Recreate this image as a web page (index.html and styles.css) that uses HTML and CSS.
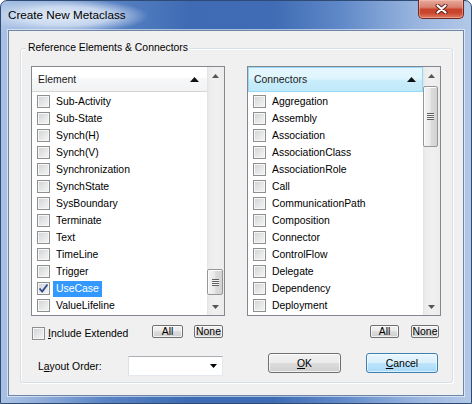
FILE: index.html
```html
<!DOCTYPE html>
<html>
<head>
<meta charset="utf-8">
<title>Create New Metaclass</title>
<link rel="stylesheet" href="styles.css">
</head>
<body>
<div class="window">
  <div class="titlebar">
    <span class="title">Create New Metaclass</span>
    <div class="close">
      <svg width="13" height="10" viewBox="0 0 13 10"><path d="M2.5 1.5 L10.5 8.5 M10.5 1.5 L2.5 8.5" stroke="#5a2219" stroke-width="4" stroke-linecap="round"/><path d="M2.5 1.5 L10.5 8.5 M10.5 1.5 L2.5 8.5" stroke="#fff" stroke-width="2.2" stroke-linecap="round"/></svg>
    </div>
  </div>
  <div class="client">
    <div class="group">
      <span class="group-label">Reference Elements &amp; Connectors</span>
      <div class="cols">
        <div class="col">
          <div class="listbox">
            <div class="list-main">
              <div class="lv-header">
                <span>Element</span>
                <svg class="sort" width="9" height="5" viewBox="0 0 9 5"><path d="M4.5 0 L9 5 H0 Z" fill="#111"/></svg>
              </div>
              <div class="rows">
                <div class="row"><span class="cb"></span><span class="txt">Sub-Activity</span></div>
                <div class="row"><span class="cb"></span><span class="txt">Sub-State</span></div>
                <div class="row"><span class="cb"></span><span class="txt">Synch(H)</span></div>
                <div class="row"><span class="cb"></span><span class="txt">Synch(V)</span></div>
                <div class="row"><span class="cb"></span><span class="txt">Synchronization</span></div>
                <div class="row"><span class="cb"></span><span class="txt">SynchState</span></div>
                <div class="row"><span class="cb"></span><span class="txt">SysBoundary</span></div>
                <div class="row"><span class="cb"></span><span class="txt">Terminate</span></div>
                <div class="row"><span class="cb"></span><span class="txt">Text</span></div>
                <div class="row"><span class="cb"></span><span class="txt">TimeLine</span></div>
                <div class="row"><span class="cb"></span><span class="txt">Trigger</span></div>
                <div class="row"><span class="cb checked"><svg width="11" height="11" viewBox="0 0 11 11"><path d="M1.5 5.5 L4.2 8.5 L9.5 1.5" fill="none" stroke="#2c4a8e" stroke-width="1.8"/></svg></span><span class="txt selected">UseCase</span></div>
                <div class="row"><span class="cb"></span><span class="txt">ValueLifeline</span></div>
              </div>
            </div>
            <div class="vscroll">
              <div class="sb-btn"><svg width="7" height="4" viewBox="0 0 7 4"><path d="M3.5 0 L7 4 H0 Z" fill="#555"/></svg></div>
              <div class="sb-track"><div class="thumb thumb-left"><div class="grip"></div></div></div>
              <div class="sb-btn"><svg width="7" height="4" viewBox="0 0 7 4"><path d="M0 0 H7 L3.5 4 Z" fill="#555"/></svg></div>
            </div>
          </div>
          <div class="ctl-row">
            <label class="chk"><span class="cb"></span><span class="chk-text"><u>I</u>nclude Extended</span></label>
            <div class="btns">
              <button class="btn sbtn all-l">All</button>
              <button class="btn sbtn none-l">None</button>
            </div>
          </div>
          <div class="bottom-row bottom-left">
            <span class="lbl">L<u>a</u>yout Order:</span>
            <div class="combo"><svg width="7" height="4" viewBox="0 0 7 4"><path d="M0 0 H7 L3.5 4 Z" fill="#000"/></svg></div>
          </div>
        </div>
        <div class="col">
          <div class="listbox">
            <div class="list-main">
              <div class="lv-header hot">
                <span>Connectors</span>
                <svg class="sort" width="9" height="5" viewBox="0 0 9 5"><path d="M4.5 0 L9 5 H0 Z" fill="#111"/></svg>
              </div>
              <div class="rows">
                <div class="row"><span class="cb"></span><span class="txt">Aggregation</span></div>
                <div class="row"><span class="cb"></span><span class="txt">Assembly</span></div>
                <div class="row"><span class="cb"></span><span class="txt">Association</span></div>
                <div class="row"><span class="cb"></span><span class="txt">AssociationClass</span></div>
                <div class="row"><span class="cb"></span><span class="txt">AssociationRole</span></div>
                <div class="row"><span class="cb"></span><span class="txt">Call</span></div>
                <div class="row"><span class="cb"></span><span class="txt">CommunicationPath</span></div>
                <div class="row"><span class="cb"></span><span class="txt">Composition</span></div>
                <div class="row"><span class="cb"></span><span class="txt">Connector</span></div>
                <div class="row"><span class="cb"></span><span class="txt">ControlFlow</span></div>
                <div class="row"><span class="cb"></span><span class="txt">Delegate</span></div>
                <div class="row"><span class="cb"></span><span class="txt">Dependency</span></div>
                <div class="row"><span class="cb"></span><span class="txt">Deployment</span></div>
              </div>
            </div>
            <div class="vscroll">
              <div class="sb-btn"><svg width="7" height="4" viewBox="0 0 7 4"><path d="M3.5 0 L7 4 H0 Z" fill="#555"/></svg></div>
              <div class="sb-track"><div class="thumb thumb-right"><div class="grip"></div></div></div>
              <div class="sb-btn"><svg width="7" height="4" viewBox="0 0 7 4"><path d="M0 0 H7 L3.5 4 Z" fill="#555"/></svg></div>
            </div>
          </div>
          <div class="ctl-row ctl-right">
            <div class="btns btns-right">
              <button class="btn sbtn all-r">All</button>
              <button class="btn sbtn none-r">None</button>
            </div>
          </div>
          <div class="bottom-row bottom-right">
            <button class="btn big"><u>O</u>K</button>
            <button class="btn big default"><u>C</u>ancel</button>
          </div>
        </div>
      </div>
    </div>
  </div>
</div>
</body>
</html>
```

FILE: styles.css
```css
* { box-sizing: border-box; }
html, body { margin: 0; padding: 0; }
body {
  width: 472px;
  height: 404px;
  overflow: hidden;
  background: #ffffff;
  font-family: "Liberation Sans", Arial, sans-serif;
  font-size: 10.4px;
  color: #000;
}

.window {
  width: 472px;
  height: 404px;
  border: 1px solid #2f4b73;
  border-radius: 7px 7px 0 0;
  padding: 0 7px 7px 7px;
  display: flex;
  flex-direction: column;
  background:
    radial-gradient(ellipse 82px 17px at 66px 15px, rgba(232,240,250,0.95) 0%, rgba(225,235,248,0.75) 55%, rgba(225,235,248,0) 100%),
    linear-gradient(90deg, #aac2e4 0%, #96b2dc 7%, #5a84c5 22%, #3e6bb3 40%, #3f6cb4 58%, #5f88c8 72%, #98b4de 88%, #b2c8e7 100%);
}

.titlebar {
  height: 29px;
  display: flex;
  justify-content: space-between;
  align-items: flex-start;
}
.title {
  margin-top: 7px;
  font-size: 11.7px;
  line-height: 14px;
  color: #000;
}
.close {
  width: 46px;
  height: 19px;
  margin-top: -1px;
  border: 1px solid #6e2a20;
  border-top: none;
  border-radius: 0 0 5px 5px;
  background: linear-gradient(#e6a99b 0%, #d98270 40%, #c7432b 52%, #c9462d 72%, #df7d64 100%);
  box-shadow: inset 0 0 0 1px rgba(255,200,190,0.45);
  display: flex;
  align-items: center;
  justify-content: center;
}

.client {
  flex: 1;
  background: #f0f0f0;
  border: 1px solid #6f85a6;
  box-shadow: 0 0 0 1px rgba(255,255,255,0.55);
}

.group {
  position: relative;
  margin: 17px 0 0 11px;
  width: 433px;
  height: 335px;
  border: 1px solid #d5dfe5;
  border-radius: 3px;
  box-shadow: inset 1px 1px 0 #fff, 1px 1px 0 #fff;
  padding: 17px 0 0 10px;
}
.group-label {
  position: absolute;
  left: 5px;
  top: -8px;
  padding: 0 2px;
  line-height: 13px;
  background: #f0f0f0;
}

.cols {
  display: grid;
  grid-template-columns: 194px 194px;
  column-gap: 22px;
}
.col {
  display: flex;
  flex-direction: column;
}

.listbox {
  height: 250px;
  border: 1px solid #828790;
  background: #fff;
  display: flex;
}
.list-main {
  flex: 1;
  min-width: 0;
}
.lv-header {
  height: 25px;
  border-bottom: 1px solid #d5d5d5;
  background: linear-gradient(#ffffff 0%, #ffffff 45%, #f7f8fa 46%, #f1f2f4 100%);
  display: flex;
  align-items: center;
  justify-content: space-between;
  padding: 0 8px 0 6px;
  color: #1a1a1a;
}
.lv-header.hot {
  border: 1px solid #96d9f9;
  background: linear-gradient(#e5f7fe 0%, #dff5fd 45%, #c9edfb 55%, #bfe8f9 100%);
  padding: 0 6px 0 5px;
}
.sort { display: block; }

.rows { padding-top: 1px; }
.row {
  height: 17px;
  display: flex;
  align-items: center;
  padding-left: 5px;
}
.cb {
  width: 13px;
  height: 13px;
  flex: none;
  border: 1px solid #8e8f8f;
  background: linear-gradient(135deg, #cfd1d4 0%, #e6e7e8 55%, #f5f5f5 100%);
  box-shadow: inset 0 0 0 1px #f6f6f6;
  display: flex;
  align-items: center;
  justify-content: center;
}
.txt {
  margin-left: 3px;
  padding: 0 3px;
  line-height: 16px;
  white-space: nowrap;
}
.txt.selected {
  background: #3399ff;
  color: #fff;
}

.vscroll {
  width: 17px;
  flex: none;
  display: flex;
  flex-direction: column;
  background: linear-gradient(90deg, #e2e2e2 0px, #ececec 2px, #f0f0f0 9px, #ececec 100%);
}
.sb-btn {
  height: 17px;
  display: flex;
  align-items: center;
  justify-content: center;
}
.sb-btn svg { display: block; }
.sb-track { flex: 1; }
.thumb {
  width: 16px;
  border: 1px solid #979797;
  border-radius: 2px;
  background: linear-gradient(90deg, #f3f3f3 0%, #ebebeb 45%, #dcdcdc 55%, #d2d2d2 100%);
  box-shadow: inset 1px 1px 0 #fcfcfc;
  display: flex;
  align-items: center;
  justify-content: center;
}
.thumb-left { margin-top: 185px; height: 26px; }
.thumb-right { margin-top: 2px; height: 61px; width: 15px; }
.grip {
  width: 7px;
  height: 7px;
  background: repeating-linear-gradient(#606060 0px, #606060 1px, #f4f4f4 1px, #f4f4f4 2px);
}

.ctl-row {
  margin-top: 9px;
  height: 15px;
  display: flex;
  align-items: flex-start;
}
.chk {
  display: flex;
  align-items: center;
  margin-top: 2px;
  margin-left: 1px;
}
.chk-text {
  margin-left: 3px;
  line-height: 13px;
}
.btns {
  margin-left: auto;
  padding-right: 2px;
  display: flex;
  gap: 11px;
}
.btns-right { gap: 12px; }

.btn {
  font-family: inherit;
  font-size: 10.4px;
  color: #000;
  border: 1px solid #707070;
  border-radius: 3px;
  background: linear-gradient(#f2f2f2 0%, #ebebeb 49%, #dddddd 50%, #cfcfcf 100%);
  box-shadow: inset 0 0 0 1px rgba(255,255,255,0.7);
  padding: 0;
  margin: 0;
}
.sbtn {
  height: 13px;
  line-height: 11px;
  border-radius: 2px;
}
.all-l { width: 31px; }
.none-l { width: 29px; }
.all-r { width: 29px; }
.none-r { width: 28px; }

.bottom-row {
  margin-top: 13px;
  display: flex;
}
.bottom-left {
  padding-top: 3px;
  align-items: center;
}
.lbl { margin-left: 7px; }
.combo {
  margin-left: auto;
  margin-right: 2px;
  width: 95px;
  height: 20px;
  background: #fff;
  border: 1px solid #e3e9ef;
  border-top-color: #abadb3;
  border-left-color: #dbdfe6;
  display: flex;
  align-items: center;
  justify-content: flex-end;
  padding-right: 5px;
}
.combo svg { display: block; }

.bottom-right {
  justify-content: flex-end;
  gap: 25px;
  padding-right: 3px;
}
.big {
  width: 73px;
  height: 20px;
}
.big.default {
  width: 72px;
  border-color: #3c7fb1;
  background: linear-gradient(#eaf6fd 0%, #d9f0fc 49%, #bee6fd 50%, #a7d9f5 100%);
  box-shadow: inset 0 0 0 1px rgba(255,255,255,0.6);
}
```
